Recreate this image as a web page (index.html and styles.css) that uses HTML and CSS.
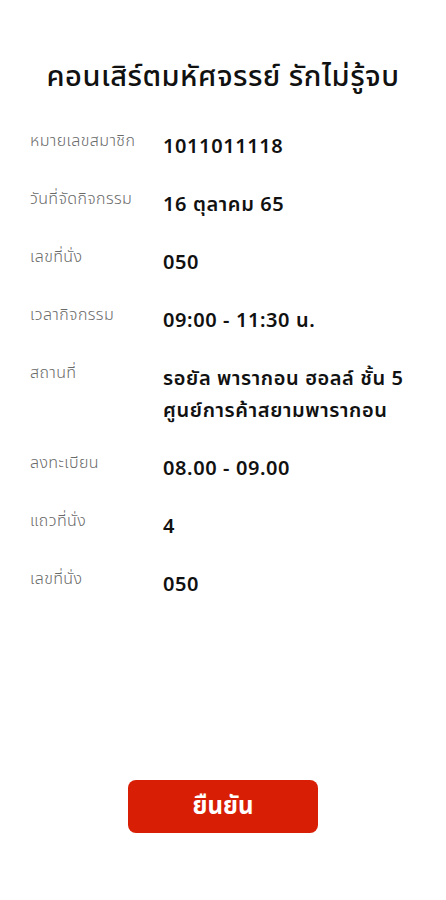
FILE: index.html
```html
<!DOCTYPE html>
<html lang="th">
<head>
  <meta charset="UTF-8" />
  <meta name="viewport" content="width=device-width, initial-scale=1.0"/>
  <title>ยืนยันการลงทะเบียน</title>
  <link rel="stylesheet" href="styles.css">
</head>
<body>
  <div class="page">
    <h1 class="title">คอนเสิร์ตมหัศจรรย์ รักไม่รู้จบ</h1>

    <div class="details">
      <div class="row">
        <div class="label">หมายเลขสมาชิก</div>
        <div class="value">1011011118</div>
      </div>
      <div class="row">
        <div class="label">วันที่จัดกิจกรรม</div>
        <div class="value">16 ตุลาคม 65</div>
      </div>
      <div class="row">
        <div class="label">เลขที่นั่ง</div>
        <div class="value">050</div>
      </div>
      <div class="row">
        <div class="label">เวลากิจกรรม</div>
        <div class="value">09:00 - 11:30 น.</div>
      </div>
      <div class="row">
        <div class="label">สถานที่</div>
        <div class="value">รอยัล พารากอน ฮอลล์ ชั้น 5<br>ศูนย์การค้าสยามพารากอน</div>
      </div>
      <div class="row">
        <div class="label">ลงทะเบียน</div>
        <div class="value">08.00 - 09.00</div>
      </div>
      <div class="row">
        <div class="label">แถวที่นั่ง</div>
        <div class="value">4</div>
      </div>
      <div class="row">
        <div class="label">เลขที่นั่ง</div>
        <div class="value">050</div>
      </div>
    </div>

    <div class="actions">
      <button class="confirm">ยืนยัน</button>
    </div>
  </div>
</body>
</html>
```

FILE: styles.css
```css
body {
  margin: 0;
  background: #fff;
  color: #111;
  font-family: 'Noto Sans', 'Noto Sans Thai', sans-serif;
}

.page {
  padding: 53px 30px 0;
}

.title {
  margin: 0 0 33px;
  font-size: 29px;
  font-weight: 500;
  letter-spacing: 0.5px;
  text-align: center;
  line-height: 44px;
  white-space: nowrap;
}

.details {
  display: flex;
  flex-direction: column;
  gap: 26px;
}

.row {
  display: grid;
  grid-template-columns: 133px 1fr;
  align-items: start;
}

.label {
  font-size: 16px;
  letter-spacing: 0.4px;
  color: #6a6a6a;
  font-weight: 300;
  line-height: 20px;
}

.value {
  font-size: 20px;
  font-weight: 600;
  letter-spacing: 0.6px;
  line-height: 32px;
  color: #111;
}

.actions {
  display: flex;
  justify-content: center;
  margin-top: 180px;
}

.confirm {
  width: 190px;
  height: 53px;
  border: none;
  border-radius: 8px;
  background: #d81f05;
  color: #fff;
  font-family: inherit;
  font-size: 24px;
  font-weight: 700;
  cursor: pointer;
}
```
